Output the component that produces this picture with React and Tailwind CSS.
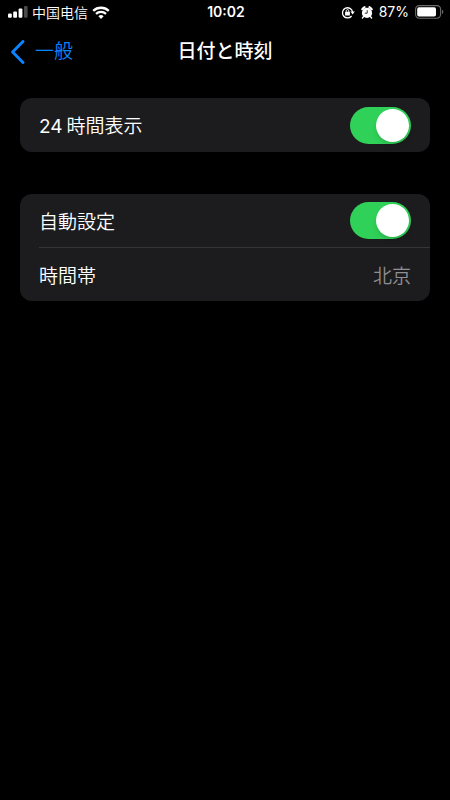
import React, { useState } from 'react';

const SignalIcon = () => (
  <svg width="20" height="12" viewBox="0 0 20 12" fill="#fff" aria-hidden="true">
    <rect x="0" y="7.6" width="3.8" height="4.2" rx="1" />
    <rect x="5.2" y="5.6" width="3.8" height="6.2" rx="1" />
    <rect x="10.6" y="2.4" width="3.8" height="9.4" rx="1" />
    <rect x="16" y="0" width="3.6" height="11.8" rx="1" fill="#4a4a4a" />
  </svg>
);

const WifiIcon = () => (
  <svg width="18" height="13" viewBox="0 0 18 13" fill="none" stroke="#fff" aria-hidden="true">
    <path d="M1.2 4.9a11.2 11.2 0 0 1 15.6 0" strokeWidth="2.3" />
    <path d="M4 7.9a7.2 7.2 0 0 1 10 0" strokeWidth="2.2" />
    <path d="M9 13 6.4 10.3a3.8 3.8 0 0 1 5.2 0Z" fill="#fff" stroke="none" />
  </svg>
);

const RotationLockIcon = () => (
  <svg width="14" height="13" viewBox="0 0 14 13" fill="none" aria-hidden="true">
    <path d="M10.6 10A5.1 5.1 0 1 1 11.6 6" stroke="#fff" strokeWidth="1.3" />
    <path d="M9.4 5.6h4.4l-2.2 2.9Z" fill="#fff" />
    <rect x="4.1" y="5.7" width="4.8" height="3.7" rx="0.5" fill="#fff" />
    <path d="M5.2 6V4.9a1.3 1.3 0 0 1 2.6 0V6" stroke="#fff" strokeWidth="0.9" />
  </svg>
);

const AlarmIcon = () => (
  <svg width="12" height="13" viewBox="0 0 12 13" fill="none" aria-hidden="true">
    <circle cx="6" cy="6.9" r="5.1" fill="#fff" />
    <path d="M1.1 3.3A9 9 0 0 1 3.6 1.1" stroke="#fff" strokeWidth="1.9" strokeLinecap="round" />
    <path d="M10.9 3.3A9 9 0 0 0 8.4 1.1" stroke="#fff" strokeWidth="1.9" strokeLinecap="round" />
    <path d="M2.5 10.6 1.4 12M9.5 10.6l1.1 1.4" stroke="#fff" strokeWidth="1.4" strokeLinecap="round" />
    <path d="M6.2 4.2v3H3.8" stroke="#000" strokeWidth="0.8" />
  </svg>
);

const BatteryIcon = () => (
  <svg width="29" height="14" viewBox="0 0 29 14" fill="none" aria-hidden="true">
    <rect x="0.6" y="0.6" width="25" height="12.6" rx="3.6" stroke="#6b6b6b" strokeWidth="1.1" />
    <rect x="2.2" y="2.2" width="18.8" height="9.4" rx="1.8" fill="#fff" />
    <path d="M27 4.8c1.7.5 1.7 3.7 0 4.2Z" fill="#6b6b6b" />
  </svg>
);

const Switch = ({ id, checked, onChange }) => (
  <span className="relative flex h-[37px] w-[61px] shrink-0">
    <input
      id={id}
      type="checkbox"
      role="switch"
      checked={checked}
      onChange={(e) => onChange(e.target.checked)}
      className="peer h-full w-full cursor-pointer appearance-none rounded-full bg-[#39393d] transition-colors checked:bg-[#30d158]"
    />
    <span className="pointer-events-none absolute left-0.5 top-0.5 size-[33px] rounded-full bg-white shadow-md transition-transform peer-checked:translate-x-6" />
  </span>
);

const App = () => {
  const [use24Hour, setUse24Hour] = useState(true);
  const [autoSet, setAutoSet] = useState(true);

  return (
    <div
      lang="ja"
      className="min-h-screen bg-black font-['Inter','Noto_Sans_CJK_JP',sans-serif] text-white"
    >
      {/* Status bar */}
      <div className="grid h-6 grid-cols-[1fr_auto_1fr] items-center pl-2 pr-1.5 text-sm leading-6">
        <div className="flex items-center gap-1">
          <SignalIcon />
          <span lang="zh-CN" className="font-['Noto_Sans_CJK_SC',sans-serif] font-[350]">
            中国电信
          </span>
          <WifiIcon />
        </div>
        <span className="font-semibold">10:02</span>
        <div className="flex items-center justify-end gap-1.5">
          <RotationLockIcon />
          <AlarmIcon />
          <span>87%</span>
          <BatteryIcon />
        </div>
      </div>

      {/* Navigation */}
      <header className="grid h-[54px] grid-cols-[1fr_auto_1fr] items-center px-2.5 pt-0.5">
        <a href="#general" className="flex items-center gap-2.5 text-[19px] font-[350] leading-6 text-[#0a84ff]">
          <svg width="15" height="24" viewBox="0 0 15 24" fill="none" aria-hidden="true">
            <path d="M13 1.5 2.6 12 13 22.5" stroke="currentColor" strokeWidth="2.9" strokeLinecap="round" strokeLinejoin="round" />
          </svg>
          一般
        </a>
        <h1 className="text-[19px] font-medium leading-6">日付と時刻</h1>
      </header>

      <main className="flex flex-col gap-[42px] px-5 pt-5 text-[19px] font-[350] leading-6">
        <section className="rounded-xl bg-[#1c1c1e]">
          <div className="flex h-[54px] items-center justify-between px-[19px]">
            <label htmlFor="hour24" className="flex gap-1 pt-1">
              <span className="font-normal">24</span>時間表示
            </label>
            <Switch id="hour24" checked={use24Hour} onChange={setUse24Hour} />
          </div>
        </section>

        <section className="rounded-xl bg-[#1c1c1e]">
          <div className="flex h-[53px] items-center justify-between px-[19px]">
            <label htmlFor="auto" className="pt-1">自動設定</label>
            <Switch id="auto" checked={autoSet} onChange={setAutoSet} />
          </div>
          <div className="ml-[19px] flex h-[54px] items-center justify-between border-t border-[#353538] pr-[19px]">
            <span className="pt-1">時間帯</span>
            <span className="pt-1 text-[#8e8e93]">北京</span>
          </div>
        </section>
      </main>
    </div>
  );
};

export default App;
